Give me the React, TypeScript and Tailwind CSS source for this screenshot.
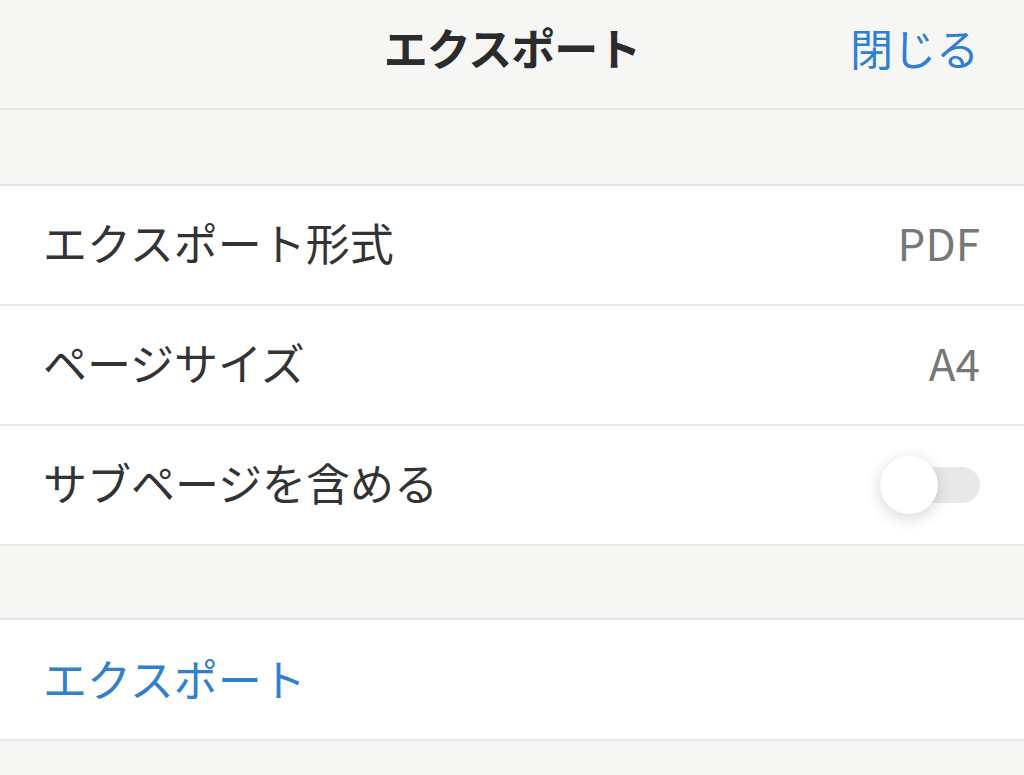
import React from "react";

const font = { fontFamily: '"Noto Sans CJK JP", "Noto Sans", sans-serif' };

function Row({ label, children }: { label: string; children?: React.ReactNode }) {
  return (
    <div className="h-[120px] bg-white border-b-2 border-[#e8e8e6] flex items-center justify-between pl-[43px] pr-[44px] pb-[6px]">
      <span className="text-[44px] leading-none text-[#333333]">{label}</span>
      {children}
    </div>
  );
}

export default function App() {
  return (
    <div className="w-[1024px] h-[775px] bg-[#f6f6f4] overflow-hidden" style={font}>
      <div className="h-[110px] border-b-2 border-[#e6e6e4] grid grid-cols-[1fr_auto_1fr] items-center pb-[14px]">
        <div />
        <span className="text-[44px] font-bold leading-none text-[#2b2b2b] tracking-[-1px]">エクスポート</span>
        <div className="flex justify-end pr-[45px]">
          <span className="text-[43px] leading-none text-[#2f80d2]">閉じる</span>
        </div>
      </div>
      <div className="h-[76px] border-b-2 border-[#e6e6e4]" />
      <Row label="エクスポート形式">
        <span className="text-[44px] leading-none text-[#777777]">PDF</span>
      </Row>
      <Row label="ページサイズ">
        <span className="text-[44px] leading-none text-[#777777]">A4</span>
      </Row>
      <Row label="サブページを含める">
        <div className="relative w-[100px] h-[58px] flex items-center translate-y-[3px]">
          <div className="absolute right-0 w-[90px] h-[36px] rounded-full bg-[#e8e8e8]" />
          <div className="absolute left-0 w-[58px] h-[58px] rounded-full bg-white shadow-[0_4px_16px_rgba(0,0,0,0.16)]" />
        </div>
      </Row>
      <div className="h-[74px] border-b-2 border-[#e6e6e4]" />
      <div className="h-[121px] bg-white border-b-2 border-[#e8e8e6] flex items-center pl-[43px] pb-[4px]">
        <span className="text-[44px] leading-none text-[#2f80d2]">エクスポート</span>
      </div>
    </div>
  );
}
